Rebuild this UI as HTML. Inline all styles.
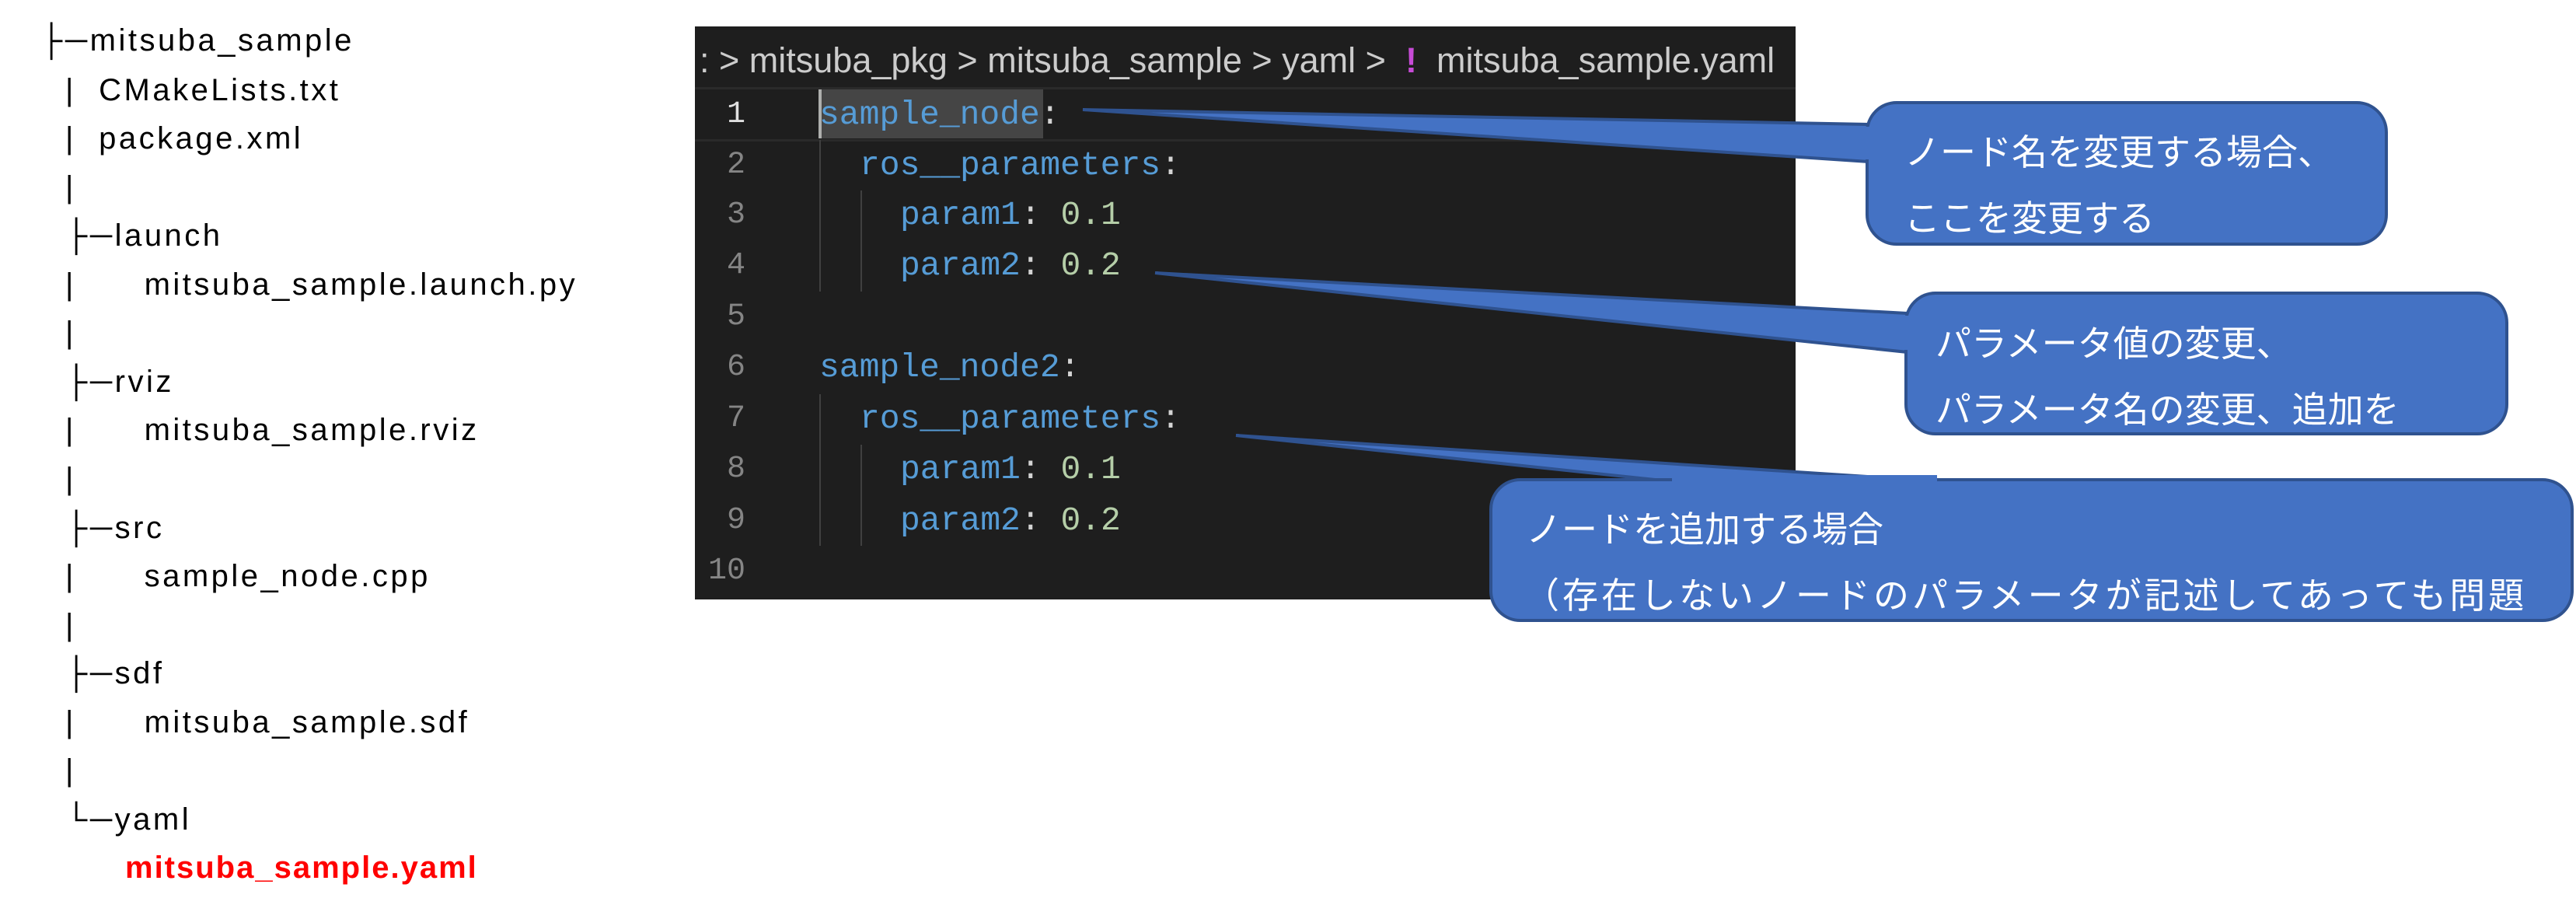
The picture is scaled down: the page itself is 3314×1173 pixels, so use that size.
<!DOCTYPE html>
<html><head><meta charset="utf-8"><style>
body{margin:0;width:3314px;height:1173px;background:#fff;position:relative;overflow:hidden;font-family:"Liberation Sans","Noto Sans CJK JP",sans-serif}
.t{position:absolute;font-size:40px;letter-spacing:3.5px;color:#000;line-height:50px;white-space:pre}
#ed{position:absolute;left:894px;top:34px;width:1416px;height:737px;background:#1e1e1e}
.bc{position:absolute;top:50px;font-size:45px;color:#cccccc;white-space:pre;line-height:56px}
.ln{position:absolute;font-family:"Liberation Mono",monospace;font-size:40px;color:#858585;line-height:64px;width:60px;text-align:center}
.c{position:absolute;font-family:"Liberation Mono",monospace;font-size:43px;line-height:64px;white-space:pre;color:#d4d4d4}
.k{color:#569cd6}.n{color:#b5cea8}
.g{position:absolute;width:2px;background:#404040}
.box{position:absolute;background:#4472c4;border:4px solid #2f528f;border-radius:40px;box-sizing:border-box;overflow:hidden}
.bt{position:absolute;color:#fff;font-size:46px;white-space:pre;line-height:60px;font-family:"Liberation Sans","Noto Sans CJK JP",sans-serif}
</style></head><body>
<div class="t" style="left:52px;top:27px">├─mitsuba_sample</div>
<div class="t" style="left:84px;top:91px">|  CMakeLists.txt</div>
<div class="t" style="left:84px;top:153px">|  package.xml</div>
<div class="t" style="left:84px;top:216px">|</div>
<div class="t" style="left:84px;top:278px">├─launch</div>
<div class="t" style="left:84px;top:341px">|      mitsuba_sample.launch.py</div>
<div class="t" style="left:84px;top:403px">|</div>
<div class="t" style="left:84px;top:466px">├─rviz</div>
<div class="t" style="left:84px;top:528px">|      mitsuba_sample.rviz</div>
<div class="t" style="left:84px;top:591px">|</div>
<div class="t" style="left:84px;top:654px">├─src</div>
<div class="t" style="left:84px;top:716px">|      sample_node.cpp</div>
<div class="t" style="left:84px;top:779px">|</div>
<div class="t" style="left:84px;top:841px">├─sdf</div>
<div class="t" style="left:84px;top:904px">|      mitsuba_sample.sdf</div>
<div class="t" style="left:84px;top:966px">|</div>
<div class="t" style="left:84px;top:1029px">└─yaml</div>
<div class="t" style="left:161px;top:1091px;color:#ff0000;font-weight:bold;letter-spacing:2px">mitsuba_sample.yaml</div>

<div id="ed"></div>
<div class="bc" style="left:900px">: &gt; mitsuba_pkg &gt; mitsuba_sample &gt; yaml &gt;  <span style="color:#c74bd6;font-weight:bold">!</span>  mitsuba_sample.yaml</div>
<div style="position:absolute;left:894px;top:112px;width:1416px;height:70px;border-top:3px solid #2a2a2a;border-bottom:3px solid #2a2a2a;box-sizing:border-box"></div>
<div style="position:absolute;left:1056px;top:115px;width:286px;height:63px;background:#454545"></div>
<div style="position:absolute;left:1053px;top:115px;width:4px;height:63px;background:#aeafad"></div>
<div class="g" style="left:1054px;top:180px;height:195px"></div>
<div class="g" style="left:1107px;top:245px;height:130px"></div>
<div class="g" style="left:1054px;top:507px;height:195px"></div>
<div class="g" style="left:1107px;top:572px;height:130px"></div>
<div class="ln" style="left:917px;top:116px;color:#e0e0e0">1</div>
<div class="ln" style="left:917px;top:181px">2</div>
<div class="ln" style="left:917px;top:245px">3</div>
<div class="ln" style="left:917px;top:310px">4</div>
<div class="ln" style="left:917px;top:376px">5</div>
<div class="ln" style="left:917px;top:441px">6</div>
<div class="ln" style="left:917px;top:507px">7</div>
<div class="ln" style="left:917px;top:572px">8</div>
<div class="ln" style="left:917px;top:638px">9</div>
<div class="ln" style="left:905px;top:703px">10</div>
<div class="c" style="left:1054px;top:116px"><span class="k">sample_node</span>:</div>
<div class="c" style="left:1106px;top:181px"><span class="k">ros__parameters</span>:</div>
<div class="c" style="left:1158px;top:245px"><span class="k">param1</span>: <span class="n">0.1</span></div>
<div class="c" style="left:1158px;top:310px"><span class="k">param2</span>: <span class="n">0.2</span></div>
<div class="c" style="left:1054px;top:441px"><span class="k">sample_node2</span>:</div>
<div class="c" style="left:1106px;top:507px"><span class="k">ros__parameters</span>:</div>
<div class="c" style="left:1158px;top:572px"><span class="k">param1</span>: <span class="n">0.1</span></div>
<div class="c" style="left:1158px;top:638px"><span class="k">param2</span>: <span class="n">0.2</span></div>

<svg style="position:absolute;left:0;top:0" width="3314" height="1173">
<polygon points="1393,141 2404,160 2404,208" fill="#4472c4" stroke="#2f528f" stroke-width="4"/>
<polygon points="1486,351 2454,403 2454,453" fill="#4472c4" stroke="#2f528f" stroke-width="4"/>
<polygon points="1590,560 2148,619 2495,619" fill="#4472c4" stroke="#2f528f" stroke-width="4"/>
</svg>
<div class="box" style="left:2400px;top:130px;width:672px;height:186px"></div>
<div class="box" style="left:2450px;top:375px;width:777px;height:185px"></div>
<div class="box" style="left:1916px;top:615px;width:1395px;height:185px"></div>
<svg style="position:absolute;left:0;top:0" width="3314" height="1173">
<polygon points="2396,163 2410,163 2410,205 2396,205" fill="#4472c4"/>
<polygon points="2448,406 2460,406 2460,450 2448,450" fill="#4472c4"/>
<polygon points="2151,611 2492,611 2492,625 2151,625" fill="#4472c4"/>
</svg>
<div class="bt" style="left:2450px;top:166px">ノード名を変更する場合、</div>
<div class="bt" style="left:2450px;top:251px">ここを変更する</div>
<div class="bt" style="left:2490px;top:412px">パラメータ値の変更、</div>
<div class="bt" style="left:2490px;top:497px">パラメータ名の変更、追加を</div>
<div class="bt" style="left:1963px;top:651px">ノードを追加する場合</div>
<div style="position:absolute;left:1920px;top:700px;width:1386px;height:96px;overflow:hidden"><div class="bt" style="left:40px;top:36px;letter-spacing:4px">（存在しないノードのパラメータが記述してあっても問題</div></div>
</body></html>
